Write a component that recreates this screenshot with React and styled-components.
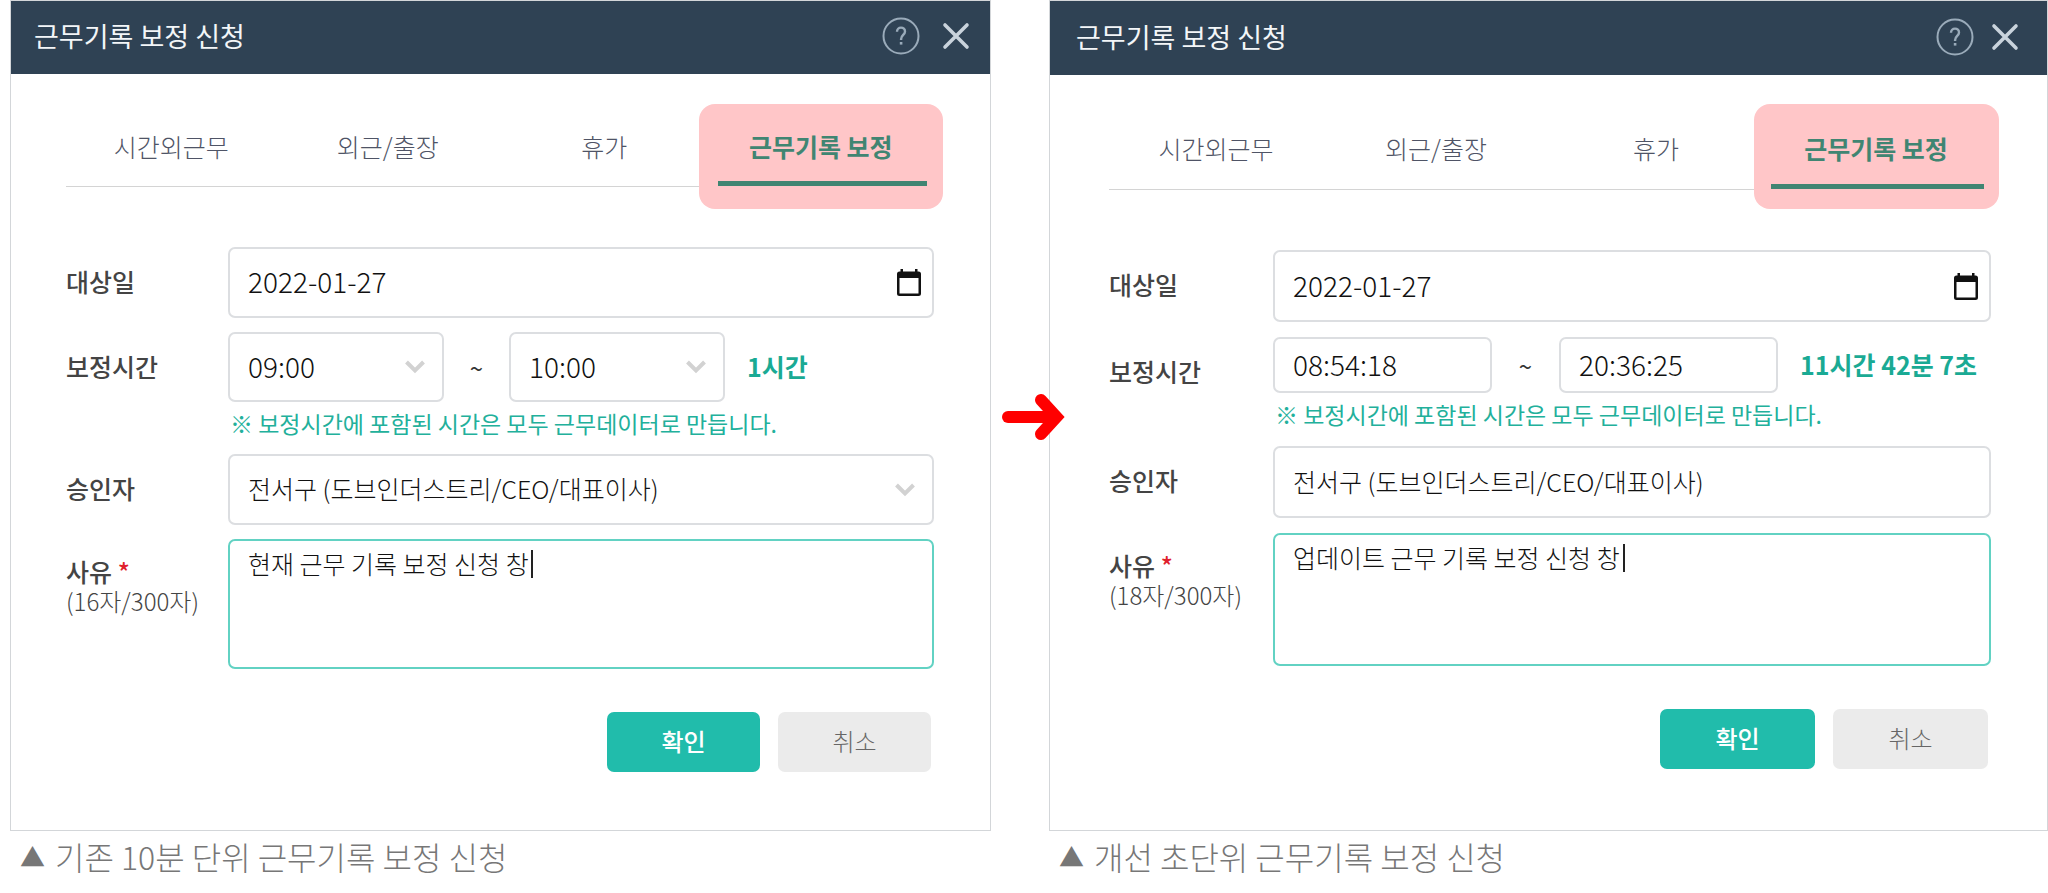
import React from 'react';
import styled, { createGlobalStyle, ThemeProvider } from 'styled-components';

const TABS = ['시간외근무', '외근/출장', '휴가', '근무기록 보정'];

const beforeTheme = {
  titleLeft: 23,
  iconGap: 22,
  iconRight: 20,
  headerHeight: 73,
  bodyLeft: 55,
  labelWidth: 162,
  tabHeight: 76,
  glow: '-6px -11px -23px -17px',
  fieldHeight: 71,
  timeHeight: 70,
  timeWidth: 216,
  tildeWidth: 65,
  rowGap: 14,
  textareaHeight: 130,
  buttonWidth: 153,
};

const afterTheme = {
  titleLeft: 26,
  iconGap: 17,
  iconRight: 28,
  headerHeight: 74,
  bodyLeft: 59,
  labelWidth: 164,
  tabHeight: 78,
  glow: '-7px -10px -20px -15px',
  fieldHeight: 72,
  timeHeight: 56,
  timeWidth: 219,
  tildeWidth: 67,
  rowGap: 15,
  textareaHeight: 133,
  buttonWidth: 155,
};

const HelpIcon = () => (
  <svg width="38" height="38" viewBox="0 0 38 38" fill="none" stroke="#9aabba">
    <circle cx="19" cy="19" r="17.5" strokeWidth="2" />
    <path d="M15 14.8c0-2.600 1.700-4.200 4-4.200s4 1.600 4 3.800c0 3.400-3.900 3.600-3.900 7.600v1" strokeWidth="2.400" />
    <path d="M19.100 25v2.600" strokeWidth="2.600" />
  </svg>
);

const CloseIcon = () => (
  <svg width="28" height="28" viewBox="0 0 28 28" stroke="#c9d3dc" strokeWidth="3.600" strokeLinecap="round">
    <path d="M3 3l22 22M25 3L3 25" />
  </svg>
);

const ChevronIcon = () => (
  <svg width="20" height="14" viewBox="0 0 20 14" fill="none" stroke="#d2d2d2" strokeWidth="4">
    <path d="M1.500 2L10 10.500L18.500 2" />
  </svg>
);

const CalendarIcon = () => (
  <svg width="24" height="27" viewBox="0 0 24 27">
    <path
      fillRule="evenodd"
      fill="#111"
      d="M3.500 0h2.500v2.500h12V0h2.500v2.500H21.500a2.500 2.500 0 0 1 2.500 2.500v19.500a2.500 2.500 0 0 1-2.500 2.500h-19a2.500 2.500 0 0 1-2.500-2.500V5a2.500 2.500 0 0 1 2.500-2.500h1zM2.500 9v15.500h19V9z"
    />
  </svg>
);

const ArrowIcon = () => (
  <svg width="63" height="46" viewBox="0 0 63 46" fill="none" stroke="#ff0000" strokeWidth="12" strokeLinecap="round">
    <path d="M6 23h45" />
    <path d="M39 6l15.500 17L39 40" strokeLinejoin="miter" />
  </svg>
);

const TimeField = ({ id, value, label, select }) =>
  select ? (
    <TimeBox>
      <Select id={id} aria-label={label} defaultValue={value} $number>
        <option>{value}</option>
      </Select>
      <FieldIcon>
        <ChevronIcon />
      </FieldIcon>
    </TimeBox>
  ) : (
    <TimeBox>
      <Input id={id} aria-label={label} type="text" defaultValue={value} $number />
    </TimeBox>
  );

const CorrectionDialog = ({ id, select, start, end, duration, approver, reason, count, caretLeft }) => (
  <Dialog>
    <Header>
      <Title>근무기록 보정 신청</Title>
      <IconButton type="button" aria-label="도움말">
        <HelpIcon />
      </IconButton>
      <IconButton type="button" aria-label="닫기">
        <CloseIcon />
      </IconButton>
    </Header>
    <Body>
      <Tabs>
        {TABS.map((tab, index) => (
          <Tab key={tab} type="button" $active={index === 3}>
            {tab}
          </Tab>
        ))}
      </Tabs>
      <Form>
        <Label htmlFor={`${id}-date`}>대상일</Label>
        <FieldBox>
          <Input id={`${id}-date`} type="text" defaultValue="2022-01-27" $number />
          <DateButton type="button" aria-label="날짜 선택">
            <CalendarIcon />
          </DateButton>
        </FieldBox>

        <Label htmlFor={`${id}-start`}>보정시간</Label>
        <div>
          <TimeRow>
            <TimeField id={`${id}-start`} value={start} select={select} />
            <Tilde>~</Tilde>
            <TimeField id={`${id}-end`} value={end} label="종료 시간" select={select} />
            <Duration>{duration}</Duration>
          </TimeRow>
          <Hint>※ 보정시간에 포함된 시간은 모두 근무데이터로 만듭니다.</Hint>
        </div>

        <Label htmlFor={`${id}-approver`}>승인자</Label>
        <FieldBox>
          {select ? (
            <>
              <Select id={`${id}-approver`} defaultValue={approver}>
                <option>{approver}</option>
              </Select>
              <FieldIcon>
                <ChevronIcon />
              </FieldIcon>
            </>
          ) : (
            <Input id={`${id}-approver`} type="text" defaultValue={approver} />
          )}
        </FieldBox>

        <ReasonLabel htmlFor={`${id}-reason`}>
          사유 <em>*</em>
          <span>({count}자/300자)</span>
        </ReasonLabel>
        <ReasonBox>
          <Textarea id={`${id}-reason`} defaultValue={reason} />
          <Caret $left={caretLeft} />
        </ReasonBox>
      </Form>
      <Actions>
        <Button type="button" $primary>
          확인
        </Button>
        <Button type="button">취소</Button>
      </Actions>
    </Body>
  </Dialog>
);

const App = () => {
  return (
    <>
      <GlobalStyle />
      <Page>
        <ThemeProvider theme={beforeTheme}>
          <Figure>
            <CorrectionDialog
              id="before"
              select
              start="09:00"
              end="10:00"
              duration="1시간"
              approver="전서구 (도브인더스트리/CEO/대표이사)"
              reason="현재 근무 기록 보정 신청 창"
              count={16}
              caretLeft={303}
            />
            <Caption>
              <span>▲</span>
              기존 10분 단위 근무기록 보정 신청
            </Caption>
          </Figure>
        </ThemeProvider>
        <ThemeProvider theme={afterTheme}>
          <Figure>
            <Arrow>
              <ArrowIcon />
            </Arrow>
            <CorrectionDialog
              id="after"
              start="08:54:18"
              end="20:36:25"
              duration="11시간 42분 7초"
              approver="전서구 (도브인더스트리/CEO/대표이사)"
              reason="업데이트 근무 기록 보정 신청 창"
              count={18}
              caretLeft={350}
            />
            <Caption>
              <span>▲</span>
              개선 초단위 근무기록 보정 신청
            </Caption>
          </Figure>
        </ThemeProvider>
      </Page>
    </>
  );
};

export default App;

const GlobalStyle = createGlobalStyle`
  * {
    box-sizing: border-box;
  }
  body {
    margin: 0;
    background: #fff;
    color: #333;
  }
  body, button, input, select, textarea {
    font-family: 'Noto Sans CJK KR', sans-serif;
  }
`;

const Page = styled.main`
  display: grid;
  grid-template-columns: 981fr 999fr;
  gap: 58px;
  padding-left: 10px;
`;

const Figure = styled.figure`
  position: relative;
  display: flex;
  flex-direction: column;
  margin: 0;
`;

const Caption = styled.figcaption`
  display: flex;
  align-items: center;
  gap: 10px;
  padding: 0 10px;
  color: #777;
  font-size: 32px;
  font-weight: 300;
  line-height: 50px;
  span {
    font-size: 25px;
  }
`;

const Arrow = styled.div`
  position: absolute;
  top: 394px;
  left: -47px;
  svg {
    display: block;
  }
`;

const Dialog = styled.section`
  flex: 1;
  border: 1px solid #d3d6d9;
  background: #fff;
`;

const Header = styled.header`
  display: flex;
  align-items: center;
  gap: ${({ theme }) => theme.iconGap}px;
  height: ${({ theme }) => theme.headerHeight}px;
  padding: 0 ${({ theme }) => theme.iconRight}px 3px ${({ theme }) => theme.titleLeft}px;
  background: #2f4254;
`;

const Title = styled.h2`
  flex: 1;
  margin: 0;
  color: #f3f6f8;
  font-size: 27px;
  font-weight: 400;
  line-height: 40px;
`;

const IconButton = styled.button`
  padding: 0;
  border: 0;
  background: none;
  svg {
    display: block;
  }
`;

const Body = styled.div`
  padding: 36px 56px 58px ${({ theme }) => theme.bodyLeft}px;
`;

const Tabs = styled.nav`
  display: grid;
  grid-template-columns: repeat(4, 1fr);
  isolation: isolate;
  margin-right: 2px;
  border-bottom: 1px solid rgba(0, 0, 0, 0.17);
`;

const Tab = styled.button`
  position: relative;
  height: ${({ theme }) => theme.tabHeight}px;
  padding: 0 6px 4px 0;
  border: 0;
  background: none;
  color: ${({ $active }) => ($active ? '#408572' : '#4f5466')};
  font-size: 25px;
  font-weight: ${({ $active }) => ($active ? 700 : 300)};

  &::before {
    content: '';
    display: ${({ $active }) => ($active ? 'block' : 'none')};
    position: absolute;
    inset: ${({ theme }) => theme.glow};
    z-index: -1;
    border-radius: 16px;
    background: #ffc6c8;
  }
  &::after {
    content: '';
    display: ${({ $active }) => ($active ? 'block' : 'none')};
    position: absolute;
    right: 5px;
    bottom: 0;
    left: 2px;
    height: 5px;
    background: #408572;
  }
`;

const Form = styled.form`
  display: grid;
  grid-template-columns: ${({ theme }) => theme.labelWidth}px 1fr;
  row-gap: ${({ theme }) => theme.rowGap}px;
  margin-top: 60px;
`;

const Label = styled.label`
  color: #444;
  font-size: 25px;
  font-weight: 500;
  line-height: ${({ theme }) => theme.fieldHeight - 3}px;
`;

const ReasonLabel = styled.label`
  padding-top: 18px;
  color: #444;
  font-size: 25px;
  font-weight: 500;
  line-height: 29px;
  em {
    color: #e0202c;
    font-style: normal;
  }
  span {
    display: block;
    color: #444;
    font-size: 24px;
    font-weight: 300;
  }
`;

const FieldBox = styled.div`
  position: relative;
  height: ${({ theme }) => theme.fieldHeight}px;
`;

const TimeBox = styled.div`
  position: relative;
  width: ${({ theme }) => theme.timeWidth}px;
  height: ${({ theme }) => theme.timeHeight}px;
`;

const Input = styled.input`
  width: 100%;
  height: 100%;
  padding: 0 18px 3px;
  border: 2px solid #dcdee1;
  border-radius: 7px;
  outline: none;
  background: #fff;
  color: #111;
  font-size: ${({ $number }) => ($number ? 28 : 25)}px;
  font-weight: 300;
`;

const Select = styled(Input).attrs({ as: 'select' })`
  appearance: none;
`;

const FieldIcon = styled.span`
  position: absolute;
  inset: 0 19px 0 auto;
  display: flex;
  align-items: center;
  pointer-events: none;
`;

const DateButton = styled.button`
  position: absolute;
  inset: 0 13px 0 auto;
  display: flex;
  align-items: center;
  padding: 0;
  border: 0;
  background: none;
`;

const TimeRow = styled.div`
  display: flex;
  align-items: center;
`;

const Tilde = styled.span`
  width: ${({ theme }) => theme.tildeWidth}px;
  font-size: 24px;
  font-weight: 400;
  text-align: center;
`;

const Duration = styled.strong`
  margin-left: 22px;
  padding-bottom: 2px;
  color: #1aaa94;
  font-size: 25px;
  font-weight: 700;
  white-space: nowrap;
`;

const Hint = styled.p`
  margin: 5px 0 1px 2px;
  color: #22b09b;
  font-size: 23px;
  font-weight: 400;
  line-height: 32px;
  white-space: nowrap;
`;

const ReasonBox = styled.div`
  position: relative;
`;

const Textarea = styled.textarea`
  display: block;
  width: 100%;
  height: ${({ theme }) => theme.textareaHeight}px;
  padding: 5px 18px;
  border: 2px solid #62d2c3;
  border-radius: 7px;
  outline: none;
  color: #111;
  font-size: 25px;
  font-weight: 300;
  line-height: 34px;
  resize: none;
`;

const Caret = styled.span`
  position: absolute;
  top: 11px;
  left: ${({ $left }) => $left}px;
  width: 2px;
  height: 28px;
  background: #222;
`;

const Actions = styled.div`
  display: flex;
  justify-content: flex-end;
  gap: 18px;
  margin-top: 43px;
  padding-right: 3px;
`;

const Button = styled.button`
  width: ${({ theme }) => theme.buttonWidth}px;
  height: 60px;
  padding: 0 0 4px;
  border: 0;
  border-radius: 7px;
  background: ${({ $primary }) => ($primary ? '#21bcab' : '#ebebeb')};
  color: ${({ $primary }) => ($primary ? '#fff' : '#666')};
  font-size: 24px;
  font-weight: ${({ $primary }) => ($primary ? 500 : 300)};
`;
